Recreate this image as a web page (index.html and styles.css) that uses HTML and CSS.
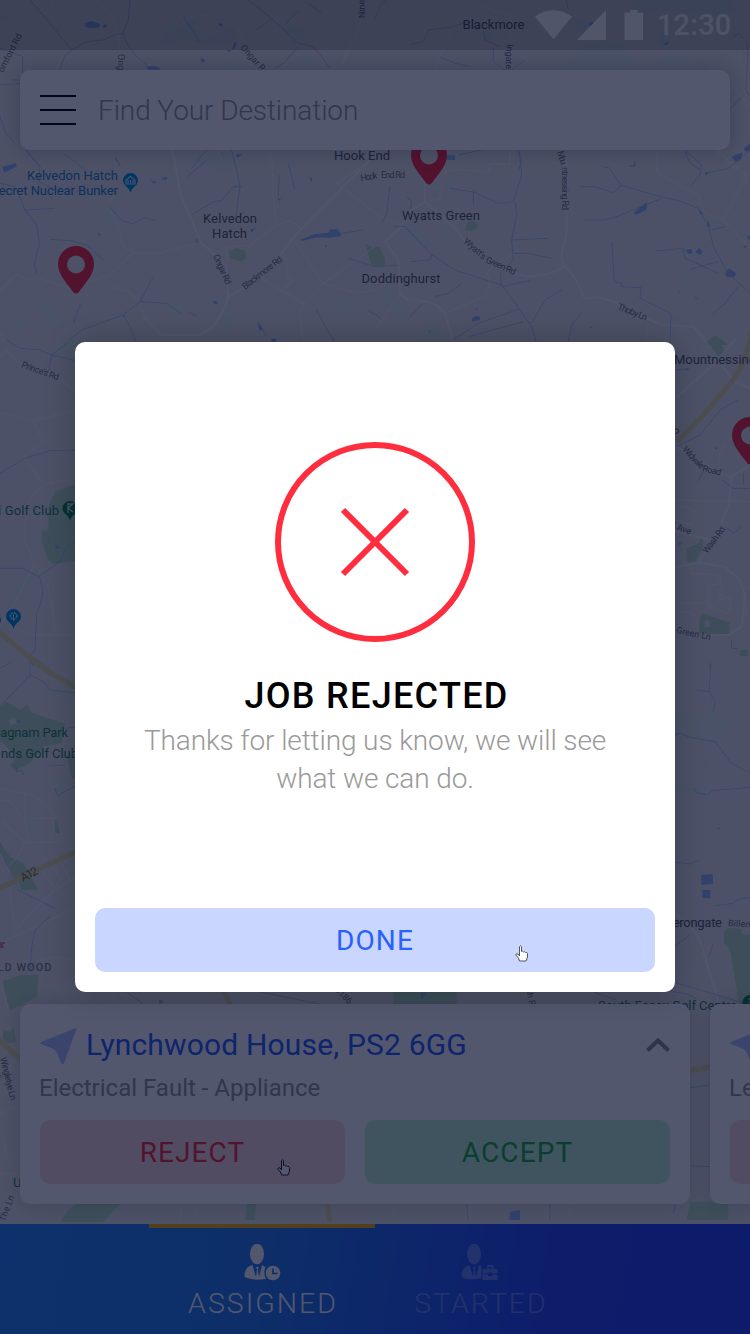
FILE: index.html
```html
<!DOCTYPE html>
<html lang="en">
<head>
<meta charset="utf-8">
<title>Job rejected</title>
<link rel="stylesheet" href="styles.css">
</head>
<body>
<div class="screen">
  <svg class="map" viewBox="0 0 750 1334" width="750" height="1334">
    <defs>
      <g id="pin"><path d="M0 47.5C-2 47.500-3 46-4 44.500C-12 34-18 27-18 18A18 18 0 0 1 18 18C18 27 12 34 4 44.500C3 46 2 47.500 0 47.500Z" fill="#ff2c3c"/><circle cy="18.500" r="9" fill="#eeecea"/></g>
      <path id="poi" d="M0 20C-1 14-7.500 13-7.500 7.500A7.500 7.500 0 0 1 7.500 7.500C7.500 13 1 14 0 20Z"/>
    </defs>
    <!-- north-west -->
    <g transform="scale(.33333)">
      <path class="park pale" d="M480 130L515 70L550 85L570 55L590 60L580 85L620 105L700 85L715 125L640 140L600 125L540 118L490 140ZM0 30L20 60L0 55ZM850 80L880 75L925 110L905 120L850 95ZM905 170L925 155L945 190L920 210L900 195ZM650 195L690 185L710 205L650 208ZM655 470L690 455L705 500L650 505ZM580 470L610 455L600 490L580 505ZM860 485L885 490L880 508L858 505Z"/>
      <path class="lake" d="M252 70L275 63L300 72L296 83L270 85L256 80ZM308 75L320 73L320 82L308 83ZM440 200L460 197L480 205L478 209H444ZM602 175L615 178L612 187L602 185ZM655 70L668 71L667 79L657 77ZM680 150L693 149L690 156L680 154ZM700 130L712 125L705 145L697 150ZM8 500L48 490L50 500L12 510ZM708 464L725 463L712 473Z"/>
      <path class="road" d="M165 0C150 20 155 35 110 55C60 80 20 130 0 190M280 0C320 20 350 60 357 110L363 210M490 0C500 25 520 40 555 60C580 40 640 45 680 55C730 80 720 120 740 150L790 205M1085 50C1080 110 1040 130 1022 210M515 450L530 510M808 450V510M372 460L360 490M700 450L720 480"/>
      <path class="stream" d="M90 0L150 70L215 150L260 125L310 120L345 103L370 100L385 140L410 170L450 205M215 150L195 165L180 208M390 0L385 60L368 100M0 145L68 170V250L0 255M550 50L600 125M745 0L815 55L895 130L940 140L965 170L990 205M815 55L770 90M855 75L895 30M895 140L850 190L820 208M925 10L965 40M65 240L35 240M0 350L15 395L45 430M80 450L120 500M190 460L255 508M620 450L575 505M665 455L690 508M345 470L360 500"/>
    </g>
    <!-- north-east -->
    <g transform="translate(375) scale(.33333)">
      <path class="park pale" d="M540 208L600 175L620 145L690 120L740 135L780 185L750 208ZM850 185L885 155L935 165L930 200L870 195ZM960 185L990 175L1000 205H960ZM770 0L1070 0L1075 35L1010 50L880 30L780 40ZM845 100L880 95L885 135L855 130ZM600 60L640 65L635 100L600 95ZM325 95L350 90L345 125L330 120Z"/>
      <path class="lake" d="M868 130L880 125L878 134L866 134ZM640 68L655 66L652 78L643 76ZM1070 470L1103 458L1097 480L1080 484ZM1105 445L1125 432V450L1113 456ZM215 466L240 467L240 480L215 479Z"/>
      <path class="road" d="M295 0C330 30 370 30 405 45M450 0L410 45C405 85 410 105 408 210M330 20L370 40M275 20L230 90L200 155L180 208M1005 200L1065 250L1125 320M405 450V492H343V510M1095 150V180M548 450L570 510M847 450V510M1025 450L1080 505"/>
      <path class="stream" d="M0 55L15 20L30 0M105 134L145 125L160 90L235 80L275 65M375 140L330 120L325 95M355 145V185L390 210M450 180L410 208M195 170L240 190L287 200M575 0L578 25M1075 110L1090 100L1115 125L1118 170L1112 270L1125 290M1100 290L1068 325M320 450L250 465M425 450L440 480L432 508M930 455L945 490L975 508M780 485V498L765 500"/>
    </g>
    <!-- below the search bar, west -->
    <g transform="translate(0 150) scale(.33333)">
      <path class="park pale" d="M255 110L300 115L295 150L255 140ZM290 180L340 170L355 220L310 235ZM400 230L440 220L430 255L405 290L393 260ZM85 420L125 420L170 490L190 520L150 520ZM505 460L545 450L560 480L520 505ZM0 520L60 500L95 510L15 570ZM610 35L650 5L700 20L695 60L640 60ZM680 470L705 475L700 530L665 530ZM1000 445L1045 440L1060 510L1010 490Z"/>
      <path class="park" d="M685 305L710 293L735 303L740 325L722 336L690 325ZM585 265H600L596 280H585ZM1095 280L1125 295V350L1115 345Z"/>
      <path class="lake" d="M8 55L45 40L50 50L12 68ZM455 92L472 96L460 101ZM485 83L502 80L500 89L487 89ZM708 14L725 13L712 25ZM900 270L945 252L985 248L990 238L1015 238L1025 258L990 263L950 262L910 272ZM773 518L790 538L778 542ZM812 565L830 567L828 578L815 577ZM750 238L766 235L755 248ZM640 453L653 454L652 463L640 460ZM928 82L937 86L933 98ZM832 144L843 147L838 153ZM974 285L982 287L979 294ZM292 248L303 253L300 258Z"/>
      <path class="road main" d="M517 0L528 60L545 145L572 200L600 275L645 315L680 350L684 440M1110 30L1040 100L905 235L850 300L800 370L684 442L670 480L640 530L600 555H485"/>
      <path class="road" d="M605 277L475 310L400 308L370 290L350 215L325 165L345 130M400 308L330 375L210 415L120 385L75 388L50 372L0 420M330 410L385 425L420 455L430 500L485 555M680 290L745 288L830 225L870 212L903 237M830 225L820 140L815 0M885 275L970 400L1070 430L1125 420M970 400L910 460L900 500L910 580M910 460L785 385M680 340V290M850 300L865 385L880 390L855 415M970 400L1125 290M1125 20L1010 100L1125 190M0 545L15 580M655 0L665 40"/>
      <path class="stream" d="M75 0L120 50L115 95L170 120M345 0M75 180L110 225L118 280L103 345L110 372M75 180L165 175M75 180L45 110L0 100M325 165L365 212L400 222L430 203L470 212M420 455L370 495L245 540L190 585M420 455L500 460L545 492M420 455L460 380M150 268L210 272L260 285L310 330M370 495L390 530L408 580M450 90L460 95M575 195L640 155L665 152L700 110H725M695 0L710 60L720 110L708 200M620 30L560 82M865 40L885 120M838 75L835 140M900 270L1090 240M950 480L985 545L1005 578M775 515L800 560M242 460L220 520M345 25L360 45M565 485L590 500M1045 325L1125 350M1105 480L1125 495"/>
    </g>
    <!-- below the search bar, east -->
    <g transform="translate(375 150) scale(.33333)">
      <path class="park pale" d="M90 235L140 245L165 290L100 275ZM195 235L220 240L215 265L195 260ZM210 340L225 350L218 385L205 380ZM10 430L40 400L100 490L80 510ZM145 530L205 530L195 575H145ZM765 190L820 160L850 145L860 150L815 180ZM925 290L995 290L985 318L930 315ZM915 370L935 370L960 450L940 430ZM1005 210L1045 200L1035 240L1010 240ZM220 85L245 88L240 115L222 112ZM610 545L650 520L660 530L625 560Z"/>
      <path class="park" d="M0 290L15 292L30 325V347L0 348ZM268 240L278 218L290 212L308 220L306 235L285 243ZM1000 572L1020 556L1050 575L1055 585H1000Z"/>
      <path class="lake" d="M775 190L815 155L815 178L785 194ZM1078 15L1103 8L1097 30L1083 35ZM990 65L1002 69L991 77ZM932 300L950 296L952 310L940 312ZM962 305L972 294L984 305L974 316ZM1050 370L1063 355L1083 370L1080 380L1055 380ZM290 505L300 498L315 500V510L292 515ZM303 475L310 478L303 480ZM215 16L240 17V29L215 28ZM969 178L985 192L975 193ZM1000 210L1005 230L995 228ZM1105 285L1117 290L1110 295ZM1116 262L1125 255V270ZM161 544L167 543L165 549ZM645 530L652 530L647 536ZM912 424L917 427L913 429ZM960 440L966 445L963 449Z"/>
      <path class="road main" d="M150 100V155L240 235C290 300 330 360 465 380C520 375 540 365 570 350L600 385L630 445C700 435 720 460 770 485L860 525L955 530L995 578M575 30V230C575 280 555 300 560 330L570 350M150 155L105 185L75 235L30 275L70 330L75 430L100 450C170 450 195 470 210 490L235 578"/>
      <path class="road" d="M343 65V44H405V0M343 65L240 58L180 80M155 110H195V150H165M0 190L75 225M210 490L330 440L345 400L335 365L430 300M240 235L250 175M847 0V70L970 135L990 190L1045 210L1125 295M1045 210L1115 70M820 520L810 580M0 540L50 470L75 430M0 85L130 60M1025 0L1110 75"/>
      <path class="stream" d="M225 115L300 127L370 160L415 155L440 75L432 0M420 155L425 195L410 270L520 265M410 270L415 330L375 370L380 405L240 360L170 315L90 230L55 228M415 310L460 310L530 325M170 315L165 330L105 335M380 405L425 465L470 530L485 580M380 410L465 392M445 515L280 560M430 478L310 520L235 570M470 520L510 450L560 420M618 110L660 110L715 128L740 105L820 130L920 155L970 175L1000 225L1015 290L1060 370L1125 430M685 50L705 55L740 110M625 210H690L725 200L860 145M710 275L718 395L740 400V410L798 413L795 445L888 490L885 580M845 303L925 295L930 325L1030 370M945 358L1030 335M1090 410L1050 460L1008 497M930 0L980 45L975 75L945 110M990 70L1060 55L1125 0M620 488L590 525L580 575M45 108L35 190L20 220M95 140L110 155L105 180M295 125V165M180 440L220 430L260 400M1010 240L1050 230M145 460L105 500M0 490L20 510M0 350L70 345M765 48H778V35"/>
    </g>
    <!-- west strip -->
    <g transform="translate(0 340) scale(.33333)">
      <path class="park pale" d="M160 40L200 0H240V65ZM20 780L60 720L100 700L120 710L90 730L60 740L25 810Z"/>
      <path class="park" d="M145 500L165 455L200 440L240 430V660L160 672L145 660L125 610V570L145 572Z"/>
      <path class="lake" d="M147 605L150 600L150 610ZM163 617L175 617L180 627L170 627Z"/>
      <path class="road" d="M0 50L20 30L45 60L180 115L240 175M0 218L100 242L240 208M100 242L130 305L70 350L130 435M240 418C180 420 130 430 110 450C85 480 75 510 75 600L103 672L50 780L0 860M103 672L145 740L168 875M50 865L100 885H240M125 440V570"/>
      <path class="stream" d="M20 0L60 25L120 30L155 45L240 65M155 45L145 95M155 45L200 10M0 400L75 355L150 332L240 330M0 685L70 685L115 710C135 740 130 780 110 820L105 930L90 950L100 980M115 710L180 665L200 620L240 600"/>
      <path class="highway" d="M-5 875L80 945L150 995"/>
    </g>
    <g transform="translate(0 660) scale(.33333)">
      <path class="park pale" d="M160 95L220 90V120L145 110ZM85 475L110 480V530L85 545ZM150 360L195 350V400L170 400ZM0 500L55 415L60 430L10 490Z"/>
      <path class="park" d="M0 140L20 125L60 150L80 135L100 160L195 190L185 250L130 260L90 310L50 330L30 320L50 290L0 240ZM240 280L200 285L215 355L240 365ZM165 480L173 475L180 520L165 518ZM0 545L30 590L70 610L115 690L65 690L0 570ZM10 965L60 945L115 945L110 1000L40 1030Z"/>
      <path class="park pale" d="M25 180L45 172L50 190L30 195Z"/>
      <path class="lake" d="M50 182L60 180L60 188H51Z"/>
      <path class="road" d="M0 385L75 400C130 410 170 450 190 545L75 548L45 600L0 640M75 400L75 470L85 545M85 475L170 475M0 420L35 425L60 470M75 548L5 480M25 660L45 810M125 630L160 680M155 615L185 665M180 605L210 660M240 650C150 680 100 760 45 810M240 735L130 790L0 850M0 930L100 905L170 890L240 905M0 970L25 1045"/>
      <path class="stream" d="M90 0V45L0 140M90 45L130 65L150 90L240 100M0 25L30 10M240 370L185 400L175 410L165 385M195 205L240 200M145 318L195 315M30 310L50 320V335L65 330L70 345M0 570L30 630L55 690L165 745M150 770L105 810L95 860L90 930L105 900M98 252L135 220"/>
      <path class="highway" d="M90-5L145 35L240 90M-5 687L120 625L240 570"/>
    </g>
    <!-- east strip -->
    <g transform="translate(670 340) scale(.33333)">
      <path class="park" d="M110 0H145L168 40L145 50ZM50 625L85 610L95 590L100 620L75 665L50 665ZM22 608L35 604L38 612L25 618ZM90 830L100 820L180 848L178 882L85 885ZM210 930H235V948H210Z"/>
      <path class="map-bg" d="M105 842L118 840L120 862H105Z"/>
      <path class="lake" d="M45 85L60 86L50 92ZM133 322L143 323L138 330Z"/>
      <path class="road main" d="M195 0L130 75L20 170M155 75L195 125L240 145M0 340L20 320L150 400L185 410L240 375M185 410L175 500L150 560L85 668L0 685M0 570L125 600M85 668L165 680L210 720L225 770L215 860L175 885L100 885L0 860"/>
      <path class="road" d="M60 680V700L150 705L152 730L118 735L115 795L170 820L180 805V770L150 780V740M0 790H110M165 310L145 350L150 400M0 480L240 485M25 495L80 515L65 555L20 540M215 735L240 750M0 810L65 820L75 830"/>
      <path class="stream" d="M205 180L150 210L90 285L20 320M15 90L45 87M100 395L80 430M155 420L190 445L240 445M220 400V435M165 560L190 580L215 560M120 970V990M185 900V925H205"/>
      <path class="highway" d="M20 305C70 260 140 180 185 125C210 95 230 50 245-20"/>
    </g>
    <g transform="translate(670 660) scale(.33333)">
      <path class="park pale" d="M0 160L110 170L125 110L135 150L160 170L225 188L175 210L150 250L0 220ZM0 370L75 385L110 365L120 345L125 380L115 405L80 400L0 382ZM90 330L120 285L100 335ZM65 620L78 610L75 640Z"/>
      <path class="park" d="M162 815L175 803L215 807V822L245 825V1050H210L180 870L162 850Z"/>
      <path class="lake" d="M93 645L128 642L130 672L95 675ZM97 690L122 690L120 715L97 714ZM141 503L149 503L146 509Z"/>
      <path class="road main" d="M0 750C60 790 90 820 105 890L150 1040"/>
      <path class="stream" d="M122 10L118 95L78 90M118 95L135 125L130 155M0 230L30 220L60 232L135 245L185 310L240 340M240 382L125 392L115 405L80 398L70 385M0 605L60 612L88 600M140 737L190 730L205 718L240 712M130 850L117 890M0 870L60 825M0 995L45 1000L80 1015"/>
    </g>
    <!-- south, around the job cards -->
    <g transform="translate(0 980) scale(.33333)">
      <path class="park" d="M10 0H115L110 50L65 75L30 90L15 45ZM10 150L30 155L40 140L50 185L20 190L8 175ZM0 280L10 290L0 298ZM205 690L230 672H360L310 725H180ZM740 672H768L765 720H735ZM1180 36H1370V72H1180ZM2070 665H2185V720H2060ZM2215 0H2250V72Z"/>
      <path class="lake" d="M477 60H487V70H477ZM1260 40L1280 38L1265 60ZM1530 695L1560 690V720H1528Z"/>
      <path class="road" d="M340 36L345 72M0 400L55 380M0 580H60M10 480L30 560M60 620L20 690M545 672L540 720M590 672L585 720M1180 690L1185 720M1710 672V720M0 20L20 50"/>
      <path class="stream" d="M380 36L430 72M780 36L960 72M1400 672L1405 720M1650 672V720M1780 36L1850 60M2020 330L2130 315M2015 400L2040 620L2020 700M2010 555L2130 560M2000 0L2240 72"/>
      <path class="highway" d="M-5 180L65 240M670 30L690 75M980 665L990 725M2010 280L2140 260"/>
    </g>
    <g class="place">
      <text x="462.500" y="29" textLength="62">Blackmore</text>
      <text x="334" y="159.500" textLength="56">Hook End</text>
      <text x="203" y="223" textLength="54">Kelvedon</text>
      <text x="212" y="238" textLength="35">Hatch</text>
      <text x="402" y="220" textLength="78">Wyatts Green</text>
      <text x="361.500" y="283" textLength="79">Doddinghurst</text>
      <text x="674" y="364" textLength="82">Mountnessing</text>
      <text x="666" y="927" textLength="56">Ferongate</text>
      <text class="district" x="-11" y="971">OLD WOOD</text>
    </g>
    <g class="poi-label">
      <text x="27" y="180" textLength="91">Kelvedon Hatch</text>
      <text x="-9" y="195" textLength="127">Secret Nuclear Bunker</text>
    </g>
    <g class="golf">
      <text x="-2" y="515" textLength="61">l Golf Club</text>
      <text x="-8" y="736.500" textLength="76">Dagnam Park</text>
      <text x="1" y="757.500" textLength="77">nds Golf Club</text>
      <text x="598" y="1010" textLength="139">South Essex Golf Centre</text>
      <text x="13" y="1187">Upminster</text>
    </g>
    <g class="street">
      <text transform="translate(3 73) rotate(-63)">omford Rd</text>
      <text transform="translate(118 54) rotate(90)">Ongar Rd</text>
      <text transform="translate(240 48) rotate(48)">Ongar Rd</text>
      <text transform="translate(365 18) rotate(-92)">Nine</text>
      <text transform="translate(507 44) rotate(93)">Ingatestone</text>
      <text transform="translate(557 152) rotate(72)" textLength="14">Mou</text>
      <text transform="translate(562 167) rotate(90)" textLength="43">ntnessing Rd</text>
      <text transform="translate(361 181) rotate(-9)" textLength="17">Hook</text>
      <text transform="translate(381 178)" textLength="24">End Rd</text>
      <text transform="translate(213 256) rotate(66)" textLength="32">Ongar Rd</text>
      <text transform="translate(245 290) rotate(-38)" textLength="48">Blackmore Rd</text>
      <text transform="translate(463 242) rotate(42)" textLength="27">Wyatt's</text>
      <text transform="translate(485 262) rotate(24)" textLength="32">Green Rd</text>
      <text transform="translate(617 309) rotate(22)" textLength="31">Thoby Ln</text>
      <text transform="translate(21 367) rotate(20)" textLength="39">Prince's Rd</text>
      <text transform="translate(682 450) rotate(46)" textLength="27">Widvale</text>
      <text transform="translate(702 471) rotate(14)" textLength="19">Road</text>
      <text transform="translate(672 528) rotate(20)">l Ave</text>
      <text transform="translate(707 554) rotate(-53)" textLength="31">Wash Rd</text>
      <text transform="translate(672 632) rotate(12)" textLength="39">l Green Ln</text>
      <text transform="translate(728 926) rotate(4)">Billericay</text>
      <text transform="translate(0 1058) rotate(76)" textLength="44">Wingletye Ln</text>
      <text transform="translate(334 990) rotate(45)">B186</text>
      <text transform="translate(526 989) rotate(78)">ch Rd</text>
      <text transform="translate(5 1222) rotate(-70)">The Ln</text>
      <text class="route" transform="translate(23 882) rotate(-28)" textLength="18">A12</text>
      <text class="route" transform="translate(660 422) rotate(48)">A12</text>
    </g>
    <use href="#poi" x="130.500" y="173" fill="#0697dc"/>
    <path d="M126 180L130.500 176.500L135 180V184H126ZM128 180V183M130.500 180V183M133 180V183" fill="none" stroke="#d7efff" stroke-width="1.200"/>
    <use href="#poi" x="70" y="501" fill="#188c4c"/>
    <path d="M67 504H73L68 508L73 512M68 505V513" fill="none" stroke="#d9f3e1" stroke-width="1.300"/>
    <use href="#poi" x="13.500" y="609" fill="#0697dc"/>
    <circle cx="13.500" cy="616" r="3.200" fill="none" stroke="#d7efff" stroke-width="1.500" stroke-dasharray="2 1"/><path d="M13.500 614V621" stroke="#d7efff"/>
    <circle cx="-4" cy="620" r="5" fill="#0697dc"/>
    <use href="#poi" x="750" y="995" fill="#188c4c"/>
    <path d="M748 999H752L748 1003" fill="none" stroke="#d9f3e1"/>
    <path d="M0 943H5M0 945H3M0 947H4" stroke="#e02646"/>
    <use href="#pin" x="429" y="137"/>
    <use href="#pin" x="76" y="246"/>
    <use href="#pin" x="750" y="417"/>
  </svg>

  <div class="app">
    <header class="status">
      <svg width="108" height="30" viewBox="0 0 108 30" fill="#fff">
        <path d="M0 6.500C11-2 26-2 37 6.500L18.500 29.500ZM71 0V30H42ZM89.500 2.500H95V0H102.500V2.500H108V30H89.500Z"/>
      </svg>
      <span class="clock">12:30</span>
    </header>
    <div class="search">
      <div class="burger"><i></i><i></i><i></i></div>
      <span class="placeholder">Find Your Destination</span>
    </div>
    <div class="jobs">
      <article class="job">
        <div class="job-head">
          <svg width="37" height="37" viewBox="0 0 37 37"><path d="M1 14L34 .7Q37-.5 36 2.500L24 35Q22.500 38 21 34.500L17 25Q16 22.500 13.500 21L1 16Q-.7 15 1 14Z" fill="#b3c5ff"/></svg>
          <h2>Lynchwood House, PS2 6GG</h2>
          <svg class="chevron" width="24" height="14" viewBox="0 0 24 14"><path d="M1.500 12.500L12 2.500L22.500 12.500" fill="none" stroke="#929292" stroke-width="4"/></svg>
        </div>
        <p class="fault">Electrical Fault - Appliance</p>
        <div class="actions"><div class="btn reject">REJECT</div><div class="btn accept">ACCEPT</div></div>
      </article>
      <article class="job">
        <div class="job-head">
          <svg width="37" height="37" viewBox="0 0 37 37"><path d="M1 14L34 .7Q37-.5 36 2.500L24 35Q22.500 38 21 34.500L17 25Q16 22.500 13.500 21L1 16Q-.7 15 1 14Z" fill="#b3c5ff"/></svg>
        </div>
        <p class="fault">Leak</p>
        <div class="actions"><div class="btn reject"></div><div class="btn accept"></div></div>
      </article>
    </div>
    <nav class="tabs">
      <div class="tab active">
        <svg width="37" height="37" viewBox="0 0 37 37" fill="#fff">
          <ellipse cx="13" cy="10" rx="7" ry="10.300"/>
          <path d="M8.500 21L12 33L13 25.500L11.500 23H15L13.800 25.500L15 33L18 21L21.500 23Q19 29 22 35Q8 37 .5 33Q0 23 8.500 21Z"/>
          <circle cx="29" cy="29" r="7.300"/><path d="M29 24.500V29.500H33.500" stroke="#2475ee" stroke-width="1.600" fill="none"/>
        </svg>
        <span>ASSIGNED</span>
      </div>
      <div class="tab idle">
        <svg width="37" height="37" viewBox="0 0 37 37" fill="#fff">
          <ellipse cx="13" cy="10" rx="7" ry="10.300"/>
          <path d="M8.500 21L12 33L13 25.500L11.500 23H15L13.800 25.500L15 33L18 21L20.500 22V34Q7 37 .5 33Q0 23 8.500 21Z"/>
          <path d="M21.500 25H26V22.500Q26 21 27.500 21H31Q32.500 21 32.500 22.500V25H36.500V29.500H31.500V28.500H27V29.500H21.500ZM27.700 25H31V23H27.700ZM21.500 30.500H27V32H31.500V30.500H36.500V36H21.500Z" fill-rule="evenodd"/>
        </svg>
        <span>STARTED</span>
      </div>
    </nav>
    <svg class="cursor on-card" width="13" height="17" viewBox="0 0 13 17"><path d="M4.500 11V1.500Q5.500 0 6.500 1.500V6.500Q7.500 5.500 8.500 7Q9.500 6 10.500 7.500Q12 7 12.500 8.500V12L11 16H4.500L3.500 13L.7 10Q1 8 3 9Z" fill="#fff" stroke="#222" stroke-width="1"/></svg>
  </div>

  <div class="scrim">
    <section class="modal">
      <svg class="cross" width="200" height="200" viewBox="0 0 200 200" fill="none" stroke="#ff2e3f"><circle cx="100" cy="100" r="97" stroke-width="6"/><path d="M68 68L132 132M132 68L68 132" stroke-width="6"/></svg>
      <h1>JOB REJECTED</h1>
      <p class="message">Thanks for letting us know, we will see<br>what we can do.</p>
      <div class="done">DONE</div>
      <svg class="cursor on-modal" width="13" height="17" viewBox="0 0 13 17"><path d="M4.500 11V1.500Q5.500 0 6.500 1.500V6.500Q7.500 5.500 8.500 7Q9.500 6 10.500 7.500Q12 7 12.500 8.500V12L11 16H4.500L3.500 13L.7 10Q1 8 3 9Z" fill="#fff" stroke="#555" stroke-width="1"/></svg>
    </section>
  </div>
</div>
</body>
</html>
```

FILE: styles.css
```css
* { box-sizing: border-box; margin: 0; padding: 0; }
body { width: 750px; height: 1334px; overflow: hidden; font-family: Roboto, sans-serif; }
svg { display: block; flex: none; }

.screen { position: relative; width: 750px; height: 1334px; overflow: hidden; background: #efedeb; }
.map { position: absolute; inset: 0; }
.road { fill: none; stroke: #fff; stroke-width: 4; opacity: .45; }
.road.main { stroke-width: 6; opacity: .65; }
.stream { fill: none; stroke: #a3c0f4; stroke-width: 3; opacity: .75; }
.lake { fill: #9dbcf8; }
.park { fill: #bfe4c4; }
.park.pale { fill: #e2eeea; }
.map-bg { fill: #efedeb; }
.highway { fill: none; stroke: #ece0a4; stroke-width: 16; }
.map text { font-size: 13px; }
.place { fill: #5c5c64; }
.place .district { font-size: 11px; font-weight: 500; letter-spacing: 1px; fill: #85858f; }
.poi-label { fill: #2c86c8; }
.golf { fill: #2f8a60; }
.map .street text { font-size: 9px; fill: #77777d; }
.map .street .route { font-size: 12px; fill: #85704a; }

.app { position: relative; height: 1334px; display: flex; flex-direction: column; }
.status { height: 50px; padding: 0 18.5px 0 0; display: flex; align-items: center; justify-content: flex-end; background: rgba(0, 0, 0, .2); }
.status svg { opacity: .88; margin-right: 14px; }
.clock { font-size: 29px; font-weight: 500; letter-spacing: .2px; color: rgba(255, 255, 255, .8); }
.search { height: 80px; margin: 20px 20px 0; padding: 0 20px; display: flex; align-items: center; gap: 22px; background: #fff; border-radius: 10px; box-shadow: 0 0 20px rgba(0, 0, 0, .25); }
.burger { width: 36px; display: grid; gap: 12px; }
.burger i { height: 2px; background: #000; }
.placeholder { font-size: 28px; font-weight: 300; letter-spacing: -.09px; color: #999; }

.jobs { margin-top: auto; padding: 0 20px 20px; display: flex; gap: 20px; }
.job { flex: none; width: 670px; height: 200px; padding: 20px; background: #fff; border-radius: 10px; box-shadow: 0 0 20px rgba(0, 0, 0, .2); }
.job-head { height: 46px; display: flex; align-items: flex-start; gap: 9px; padding-top: 4px; }
.job-head h2 { margin-top: -1px; font-size: 30px; font-weight: 400; line-height: 35px; letter-spacing: .17px; color: #2f62ff; }
.chevron { margin: 10px 0 0 auto; }
.fault { height: 54px; padding-top: 4px; font-size: 24px; font-weight: 400; line-height: 28px; color: #999; margin-left: -1px; }
.actions { margin-top: -4px; display: grid; grid-template-columns: 1fr 1fr; gap: 20px; }
.btn, .done { height: 64px; display: flex; align-items: center; justify-content: center; border-radius: 10px; font-size: 28px; letter-spacing: 1.1px; }
.reject { background: #ffdcdf; color: #ff2e3f; }
.accept { background: #c5f5cf; color: #25b04a; }

.tabs { height: 110px; padding-left: 149px; display: flex; background: linear-gradient(100deg, #2b8afa 0%, #2b80f2 35%, #2a4df5 72%, #2a46f5 100%); }
.tab { width: 226px; padding: 16px 0 0 2px; display: flex; flex-direction: column; align-items: center; gap: 6px; border-top: 4px solid transparent; font-size: 28.5px; line-height: 34px; font-weight: 300; letter-spacing: 2px; color: #fff; }
.tab svg { margin-left: -4px; }
.tab.active svg { margin-left: -2px; }
.tab.active { border-top-color: #ffb400; border-radius: 0 0 3px 0; }
.tab.idle { width: 210px; }
.idle svg, .idle span { opacity: .3; }

.scrim { position: absolute; inset: 0; display: flex; align-items: center; justify-content: center; background: rgba(0, 8, 40, .68); }
.modal { position: relative; width: 600px; height: 650px; padding: 100px 20px 20px; display: flex; flex-direction: column; align-items: center; background: #fff; border-radius: 10px; box-shadow: 0 0 30px rgba(0, 0, 0, .22); }
h1 { margin-top: 32px; padding-left: 3px; font-size: 36px; line-height: 44px; font-weight: 500; letter-spacing: 1.3px; color: #000; }
.message { margin-top: 4px; font-size: 28px; line-height: 38px; font-weight: 300; letter-spacing: -.11px; color: #999; text-align: center; }
.done { width: 100%; margin-top: auto; background: #c9d6ff; color: #2a60ff; }
.cursor { position: absolute; }
.on-card { left: 277px; top: 1159px; }
.on-modal { left: 440px; top: 603px; }
```
